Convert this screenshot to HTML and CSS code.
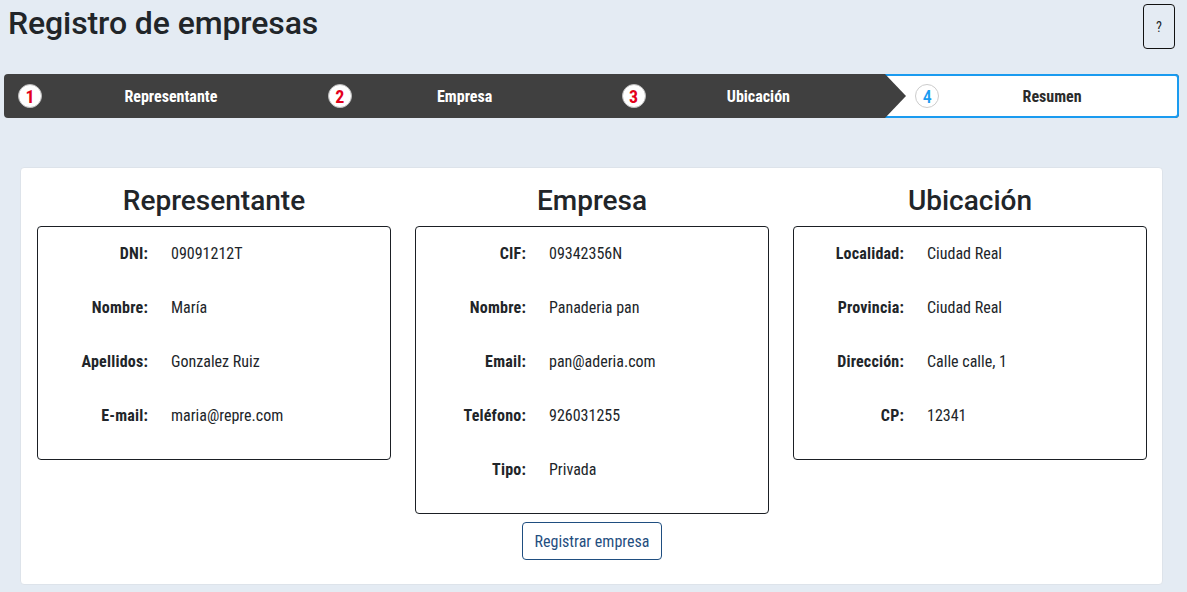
FILE: index.html
```html
<!DOCTYPE html>
<html lang="es">
<head>
<meta charset="utf-8">
<title>Registro de empresas</title>
<link rel="stylesheet" href="styles.css">
</head>
<body>
<header class="top">
  <h1 class="title">Registro de empresas</h1>
  <button class="help">?</button>
</header>
<nav class="stepper">
  <div class="step first"><span class="num">1</span><span class="label">Representante</span></div>
  <div class="step"><span class="num">2</span><span class="label">Empresa</span></div>
  <div class="step"><span class="num">3</span><span class="label">Ubicación</span></div>
  <div class="step active"><span class="num">4</span><span class="label">Resumen</span></div>
</nav>
<main class="card">
  <div class="cols">
    <section class="col">
      <h2 class="col-title">Representante</h2>
      <div class="box">
        <div class="row"><span class="k">DNI:</span><span class="v">09091212T</span></div>
        <div class="row"><span class="k">Nombre:</span><span class="v">María</span></div>
        <div class="row"><span class="k">Apellidos:</span><span class="v">Gonzalez Ruiz</span></div>
        <div class="row"><span class="k">E-mail:</span><span class="v">maria@repre.com</span></div>
      </div>
    </section>
    <section class="col">
      <h2 class="col-title">Empresa</h2>
      <div class="box">
        <div class="row"><span class="k">CIF:</span><span class="v">09342356N</span></div>
        <div class="row"><span class="k">Nombre:</span><span class="v">Panaderia pan</span></div>
        <div class="row"><span class="k">Email:</span><span class="v">pan@aderia.com</span></div>
        <div class="row"><span class="k">Teléfono:</span><span class="v">926031255</span></div>
        <div class="row"><span class="k">Tipo:</span><span class="v">Privada</span></div>
      </div>
      <button class="submit">Registrar empresa</button>
    </section>
    <section class="col">
      <h2 class="col-title">Ubicación</h2>
      <div class="box">
        <div class="row"><span class="k">Localidad:</span><span class="v">Ciudad Real</span></div>
        <div class="row"><span class="k">Provincia:</span><span class="v">Ciudad Real</span></div>
        <div class="row"><span class="k">Dirección:</span><span class="v">Calle calle, 1</span></div>
        <div class="row"><span class="k">CP:</span><span class="v">12341</span></div>
      </div>
    </section>
  </div>
</main>
</body>
</html>
```
FILE: styles.css
```css
* { box-sizing: border-box; }
html, body { margin: 0; padding: 0; }
body {
  background: #e4ebf3;
  color: #212529;
  font-family: Roboto, "Liberation Sans", sans-serif;
  width: 1187px;
  height: 592px;
  overflow: hidden;
}
.top {
  display: flex;
  justify-content: space-between;
  align-items: flex-start;
  padding: 4px 12px 0 8px;
  height: 74px;
}
.title {
  margin: 0;
  font-size: 32px;
  font-weight: 500;
  line-height: 38px;
  letter-spacing: -0.1px;
}
.help {
  width: 32px;
  height: 45px;
  border: 1px solid #111;
  border-radius: 4px;
  background: transparent;
  font-family: "Roboto Condensed", "Liberation Sans Narrow", Roboto, sans-serif;
  font-size: 14px;
  color: #212529;
  padding: 0;
}
.stepper {
  margin: 0 8px 0 4px;
  height: 44px;
  display: grid;
  grid-template-columns: repeat(4, 1fr);
  background: #404040;
  border-radius: 4px;
}
.step {
  display: flex;
  align-items: center;
  position: relative;
  padding-left: 30px;
}
.step.first { padding-left: 14px; }
.num {
  width: 24px;
  height: 24px;
  border-radius: 50%;
  background: #fff;
  border: 1px solid #bbb;
  color: #e3001b;
  font-family: "Roboto Condensed", "Liberation Sans Narrow", Roboto, sans-serif;
  font-weight: 700;
  font-size: 18px;
  display: flex;
  align-items: center;
  justify-content: center;
  flex: none;
}
.label {
  flex: 1;
  margin-left: -14px;
  text-align: center;
  color: #fff;
  font-family: "Roboto Condensed", "Liberation Sans Narrow", Roboto, sans-serif;
  font-weight: 700;
  font-size: 16px;
}
.step.first .label { margin-left: 2px; }
.step.active {
  background: #fff;
  border: 2px solid #1a9bf0;
  border-left: none;
  border-radius: 0 4px 4px 0;
  padding-left: 30px;
}
.step.active .label { margin-left: -14px; margin-right: -2px; }
.step.active::before {
  content: "";
  position: absolute;
  left: 0;
  top: -2px;
  border-top: 22px solid transparent;
  border-bottom: 22px solid transparent;
  border-left: 21px solid #404040;
}
.step.active .num {
  color: #1a9bf0;
  border-color: #ccc;
  font-weight: 500;
}
.step.active .label { color: #2b2b2b; }
.card {
  margin: 49px 24px 0 20px;
  height: 418px;
  background: #fff;
  border: 1px solid #dde3ea;
  border-radius: 4px;
  padding: 14px 16px 0 16px;
}
.cols {
  display: grid;
  grid-template-columns: repeat(3, 354px);
  column-gap: 24px;
}
.col {
  display: flex;
  flex-direction: column;
  align-items: center;
}
.col-title {
  margin: 0 0 6px 0;
  font-size: 28px;
  font-weight: 500;
  line-height: 38px;
}
.box {
  width: 100%;
  border: 1px solid #1b1f24;
  border-radius: 4px;
  padding: 16px 0 14px 0;
}
.row {
  display: flex;
  height: 20px;
  margin-bottom: 34px;
  align-items: center;
  font-size: 16px;
  font-family: "Roboto Condensed", "Liberation Sans Narrow", Roboto, sans-serif;
}
.row:last-child { margin-bottom: 20px; }
.k {
  width: 110px;
  text-align: right;
  font-weight: 700;
  letter-spacing: 0.2px;
  flex: none;
}
.v {
  margin-left: 23px;
}
.submit {
  margin-top: 8px;
  width: 140px;
  height: 38px;
  background: #fff;
  border: 1px solid #1f4e80;
  border-radius: 4px;
  color: #1f4e80;
  font-family: "Roboto Condensed", "Liberation Sans Narrow", Roboto, sans-serif;
  font-size: 16px;
  padding: 0;
}
```
